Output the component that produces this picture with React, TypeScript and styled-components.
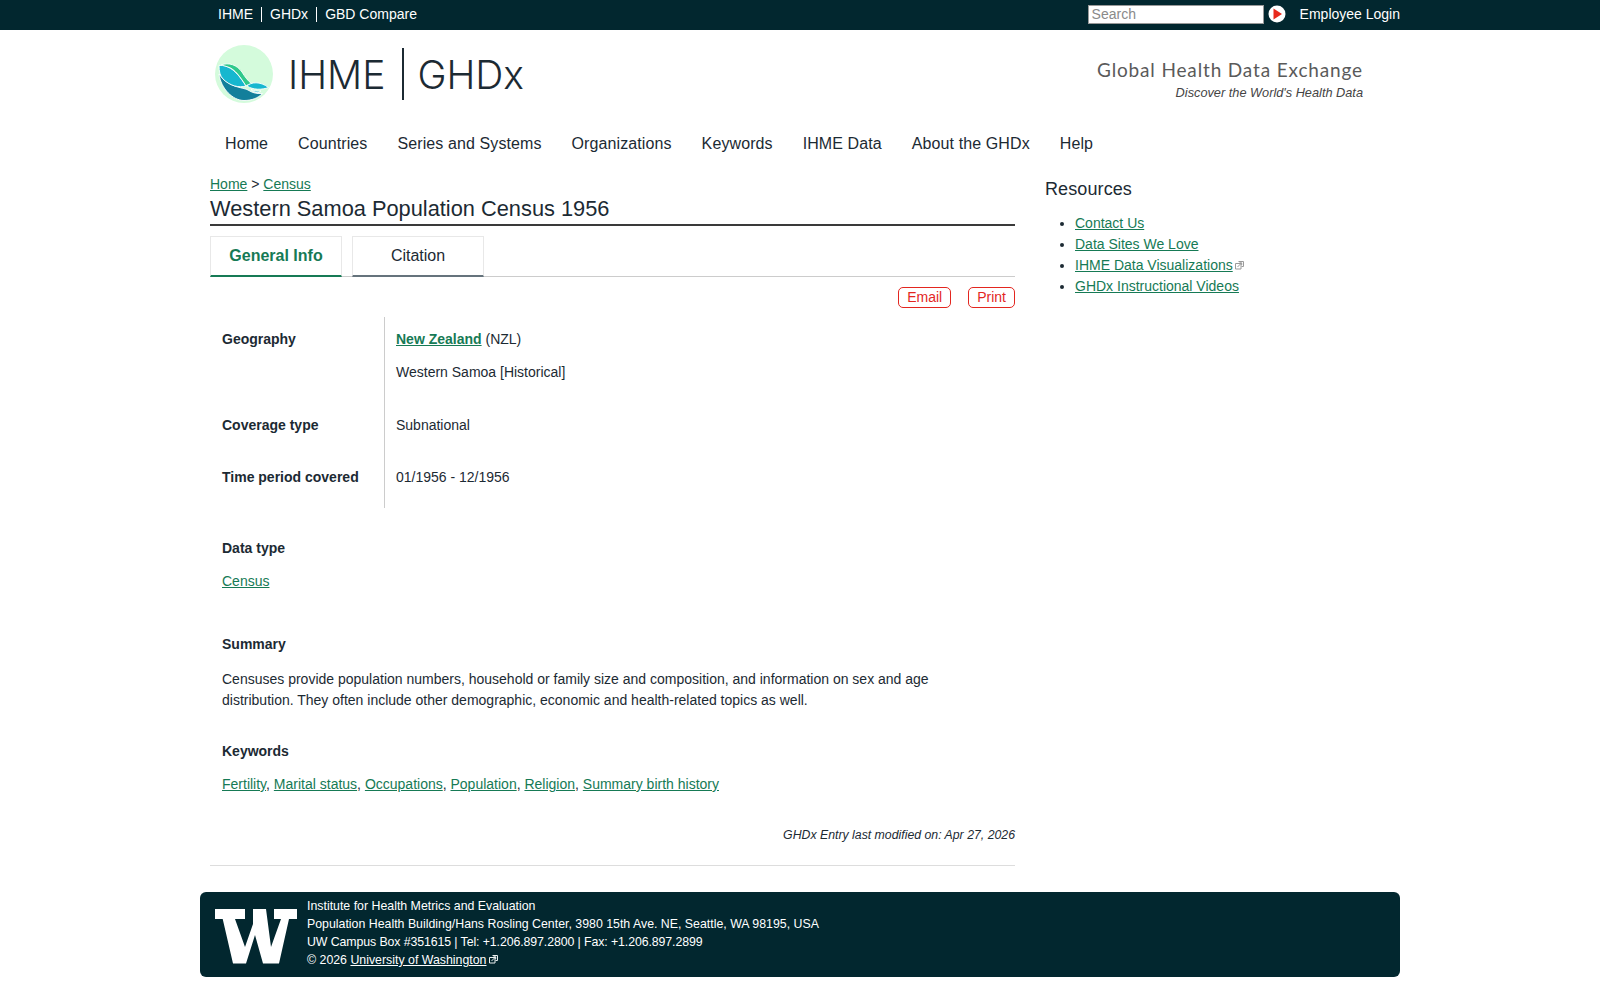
import styled, { createGlobalStyle } from "styled-components";

const DARK = "#02272f";
const INK = "#1c2a33";
const LINK = "#167a55";

const GlobalStyle = createGlobalStyle`
  body {
    margin: 0;
    background: #fff;
    color: ${INK};
    font-family: "Liberation Sans", Arial, sans-serif;
    font-size: 14px;
  }
  a {
    color: ${LINK};
  }
`;

const navItems = [
  "Home",
  "Countries",
  "Series and Systems",
  "Organizations",
  "Keywords",
  "IHME Data",
  "About the GHDx",
  "Help",
];

const keywords = [
  "Fertility",
  "Marital status",
  "Occupations",
  "Population",
  "Religion",
  "Summary birth history",
];

const ExternalIcon = ({ color = "#9a9a9a" }: { color?: string }) => (
  <ExtSvg viewBox="0 0 10 10" fill="none" stroke={color} strokeWidth="1">
    <path d="M3.5 1.5h5v5h-2" />
    <path d="M0.5 3.5h5.5v5.5H0.5z" />
    <path d="M2.5 7L6.5 3M4.5 2.8h2.2V5" />
  </ExtSvg>
);

const Logo = () => (
  <svg width="58" height="58" viewBox="0 0 58 58">
    <circle cx="29" cy="29" r="29" fill="#d4fbdc" />
    <g stroke="#fff" strokeWidth="0.9">
      <path d="M4 29C6 44 18 55.5 29 55.5C37 55.5 43 53 47.5 48.5C41 49 37 47.5 33 45C27 42 14 43 4 29Z" fill="#137f9b" />
      <path d="M4 20.5C8 20 11 21 13 22C20 25 26 33 31 41C24 43 15 41 8 34C5 31 4 26 4 20.5Z" fill="#17b7cf" />
      <path d="M6 20C14 17 22 20 27 27C30 32 33 36 37 39C34 39 32 40 31 41C26 33 20 24 13 22C10 21 8 20.5 6 20Z" fill="#2fc98b" />
      <path d="M32 41C36 37 45 36 53.5 42.5C47 45 38 45 32 41Z" fill="#17b7cf" />
      <path d="M36 44.5C39 46 43 46.5 46 46L43 47.8C40 47.5 38 46 36 44.5Z" fill="#17b7cf" />
    </g>
  </svg>
);

const UwMark = () => (
  <UwSvg width="82" height="55" viewBox="0 0 82 55">
    <path
      fill="#fff"
      d="M0 0H30V10H20L30 38L38 15V0H51L56 38L66 10H59V0H82V10H74L64 54.5H48L40 26L31 54.5H18L7.7 10H0Z"
    />
  </UwSvg>
);

const App = () => (
  <>
    <GlobalStyle />
    <TopBar>
      <TopInner>
        <TopLinks>
          <TopLink>IHME</TopLink>
          <TopLink>GHDx</TopLink>
          <TopLink>GBD Compare</TopLink>
        </TopLinks>
        <TopRight>
          <SearchBox placeholder="Search" />
          <svg width="18" height="18" viewBox="0 0 18 18">
            <circle cx="9" cy="9" r="8.5" fill="#fff" />
            <path d="M5.5 3.5L14 9L5.5 14.5Z" fill="#e8291c" />
          </svg>
          <LoginLink>Employee Login</LoginLink>
        </TopRight>
      </TopInner>
    </TopBar>

    <Page>
      <Header>
        <Brand>
          <Logo />
          <BrandName>IHME</BrandName>
          <BrandRule />
          <BrandName>GHDx</BrandName>
        </Brand>
        <Tagline>
          <TagTitle>Global Health Data Exchange</TagTitle>
          <TagSub>Discover the World's Health Data</TagSub>
        </Tagline>
      </Header>

      <Nav>
        {navItems.map((item) => (
          <NavItem key={item}>{item}</NavItem>
        ))}
      </Nav>

      <Columns>
        <Main>
          <Crumbs>
            <a href="#">Home</a> &gt; <a href="#">Census</a>
          </Crumbs>
          <Title>Western Samoa Population Census 1956</Title>
          <Tabs>
            <Tab $active>General Info</Tab>
            <Tab>Citation</Tab>
          </Tabs>
          <Actions>
            <ActionButton>Email</ActionButton>
            <ActionButton>Print</ActionButton>
          </Actions>

          <InfoTable>
            <InfoLabels>
              <LabelCell $h={86}>Geography</LabelCell>
              <LabelCell $h={52}>Coverage type</LabelCell>
              <LabelCell $h={52}>Time period covered</LabelCell>
            </InfoLabels>
            <InfoValues>
              <ValueCell $h={33}>
                <div>
                  <StrongLink href="#">New Zealand</StrongLink> (NZL)
                </div>
              </ValueCell>
              <ValueCell $h={53}>Western Samoa [Historical]</ValueCell>
              <ValueCell $h={52}>Subnational</ValueCell>
              <ValueCell $h={52}>01/1956 - 12/1956</ValueCell>
            </InfoValues>
          </InfoTable>

          <Section $top={32}>
            <SectionLabel>Data type</SectionLabel>
            <SectionBody $gap={16}>
              <a href="#">Census</a>
            </SectionBody>
          </Section>

          <Section $top={44}>
            <SectionLabel>Summary</SectionLabel>
            <SectionBody $gap={18}>
              Censuses provide population numbers, household or family size and composition, and
              information on sex and age
              <br />
              distribution. They often include other demographic, economic and health-related
              topics as well.
            </SectionBody>
          </Section>

          <Section $top={32}>
            <SectionLabel>Keywords</SectionLabel>
            <SectionBody $gap={16}>
              {keywords.map((k, i) => (
                <span key={k}>
                  <a href="#">{k}</a>
                  {i < keywords.length - 1 ? ", " : ""}
                </span>
              ))}
            </SectionBody>
          </Section>

          <Modified>GHDx Entry last modified on: Apr 27, 2026</Modified>
          <Rule />
        </Main>

        <Side>
          <SideTitle>Resources</SideTitle>
          <SideList>
            <li>
              <a href="#">Contact Us</a>
            </li>
            <li>
              <a href="#">Data Sites We Love</a>
            </li>
            <li>
              <a href="#">IHME Data Visualizations</a>
              <ExternalIcon />
            </li>
            <li>
              <a href="#">GHDx Instructional Videos</a>
            </li>
          </SideList>
        </Side>
      </Columns>

      <Footer>
        <UwMark />
        <FooterText>
          <div>Institute for Health Metrics and Evaluation</div>
          <div>Population Health Building/Hans Rosling Center, 3980 15th Ave. NE, Seattle, WA 98195, USA</div>
          <PhoneLine>UW Campus Box #351615 | Tel: +1.206.897.2800 | Fax: +1.206.897.2899</PhoneLine>
          <div>
            © 2026 <a href="#">University of Washington</a>
            <ExternalIcon color="#e8eeee" />
          </div>
        </FooterText>
      </Footer>
    </Page>
  </>
);

const TopBar = styled.div`
  height: 30px;
  background: ${DARK};
  color: #fff;
`;

const TopInner = styled.div`
  width: 1200px;
  height: 28px;
  padding-bottom: 2px;
  margin: 0 auto;
  display: flex;
  align-items: center;
  justify-content: space-between;
`;

const TopLinks = styled.div`
  display: flex;
  align-items: center;
  padding-left: 18px;
`;

const TopLink = styled.span`
  font-size: 14px;
  line-height: 15px;
  padding: 0 8px;
  border-left: 1px solid #fff;

  &:first-child {
    padding-left: 0;
    border-left: none;
  }
`;

const TopRight = styled.div`
  display: flex;
  align-items: center;
`;

const SearchBox = styled.input`
  width: 176px;
  height: 19px;
  box-sizing: border-box;
  border: 1px solid #999;
  padding: 0 3px;
  margin-right: 4px;
  font-family: inherit;
  font-size: 14px;
  background: #fff;

  &::placeholder {
    color: #8a8a8a;
  }
`;

const LoginLink = styled.span`
  margin-left: 14px;
  font-size: 14px;
`;

const Page = styled.div`
  width: 1200px;
  margin: 0 auto;
`;

const Header = styled.header`
  height: 84px;
  padding: 15px 37px 0 15px;
  display: flex;
  justify-content: space-between;
`;

const Brand = styled.div`
  display: flex;
  align-items: center;
  height: 58px;
`;

const BrandName = styled.span`
  font-family: Inter, sans-serif;
  font-weight: 300;
  font-size: 39px;
  color: ${INK};
  margin-left: 15px;
`;

const BrandRule = styled.span`
  width: 2px;
  height: 52px;
  background: ${INK};
  margin-left: 17px;
  margin-right: -2px;
`;

const Tagline = styled.div`
  text-align: right;
  padding-top: 13px;
`;

const TagTitle = styled.div`
  font-family: Lato, sans-serif;
  font-size: 19px;
  letter-spacing: 0.85px;
  color: #5a5a5a;
  line-height: 24px;
`;

const TagSub = styled.div`
  font-size: 12.75px;
  font-style: italic;
  color: #444;
  margin-top: 3px;
`;

const Nav = styled.nav`
  display: flex;
  gap: 30px;
  padding-left: 25px;
  height: 30px;
  align-items: center;
`;

const NavItem = styled.span`
  font-size: 16px;
  letter-spacing: 0.1px;
  color: ${INK};
`;

const Columns = styled.div`
  display: flex;
  padding-left: 10px;
  gap: 30px;
  margin-top: 16px;
`;

const Main = styled.main`
  width: 805px;
`;

const Crumbs = styled.div`
  font-size: 14px;
  line-height: 18px;
`;

const Title = styled.h1`
  margin: 3px 0 0;
  padding-bottom: 2px;
  font-size: 21.8px;
  line-height: 26px;
  font-weight: 400;
  border-bottom: 2px solid #3a3a3a;
`;

const Tabs = styled.div`
  display: flex;
  gap: 10px;
  margin-top: 10px;
  height: 41px;
  box-shadow: inset 0 -1px 0 #ccc;
`;

const Tab = styled.div<{ $active?: boolean }>`
  width: 132px;
  height: 41px;
  box-sizing: border-box;
  display: flex;
  align-items: center;
  justify-content: center;
  font-size: 16px;
  font-weight: ${(p) => (p.$active ? 700 : 400)};
  color: ${(p) => (p.$active ? LINK : INK)};
  border: 1px solid #e8e8e8;
  border-bottom: 2px solid ${(p) => (p.$active ? LINK : "#65737c")};
`;

const Actions = styled.div`
  display: flex;
  justify-content: flex-end;
  gap: 17px;
  margin-top: 10px;
`;

const ActionButton = styled.span`
  height: 21px;
  box-sizing: border-box;
  padding: 0 8px;
  border: 1px solid #e3261f;
  border-radius: 5px;
  color: #e3261f;
  font-size: 14px;
  line-height: 19px;
`;

const InfoTable = styled.div`
  display: flex;
  margin-top: 9px;
  height: 191px;
`;

const InfoLabels = styled.div`
  flex: none;
  width: 162px;
  padding-left: 12px;
  border-right: 1px solid #ccc;
`;

const LabelCell = styled.div<{ $h: number }>`
  height: ${(p) => p.$h}px;
  padding-top: 14px;
  box-sizing: border-box;
  font-weight: 700;
  line-height: 16px;
`;

const InfoValues = styled.div`
  padding-left: 11px;
`;

const ValueCell = styled.div<{ $h: number }>`
  height: ${(p) => p.$h}px;
  padding-top: 14px;
  box-sizing: border-box;
  line-height: 16px;
`;

const StrongLink = styled.a`
  font-weight: 700;
`;

const Section = styled.section<{ $top: number }>`
  margin-top: ${(p) => p.$top}px;
  padding-left: 12px;
`;

const SectionLabel = styled.div`
  font-weight: 700;
  line-height: 16px;
`;

const SectionBody = styled.div<{ $gap: number }>`
  margin-top: ${(p) => p.$gap - 1}px;
  line-height: 21px;
`;

const Modified = styled.div`
  margin-top: 31px;
  text-align: right;
  font-size: 12.3px;
  font-style: italic;
  line-height: 18px;
`;

const Rule = styled.div`
  margin-top: 21px;
  height: 1px;
  background: #ddd;
`;

const Side = styled.aside`
  flex: 1;
  padding-top: 2px;
`;

const SideTitle = styled.h2`
  margin: 0;
  font-size: 18px;
  letter-spacing: 0.1px;
  font-weight: 400;
  line-height: 24px;
`;

const SideList = styled.ul`
  margin: 12px 0 0;
  padding-left: 30px;
  line-height: 21px;
`;

const ExtSvg = styled.svg`
  width: 10px;
  height: 10px;
  margin-left: 2px;
`;

const UwSvg = styled.svg`
  margin-top: 3px;
`;

const Footer = styled.footer`
  margin-top: 26px;
  height: 85px;
  display: flex;
  align-items: center;
  gap: 10px;
  padding: 0 15px;
  background: ${DARK};
  border-radius: 6px;
  color: #fff;

  a {
    color: #fff;
  }
`;

const FooterText = styled.div`
  font-size: 12.35px;
  line-height: 18px;
  margin-top: -3px;
`;

const PhoneLine = styled.div`
  letter-spacing: -0.1px;
`;

export default App;
